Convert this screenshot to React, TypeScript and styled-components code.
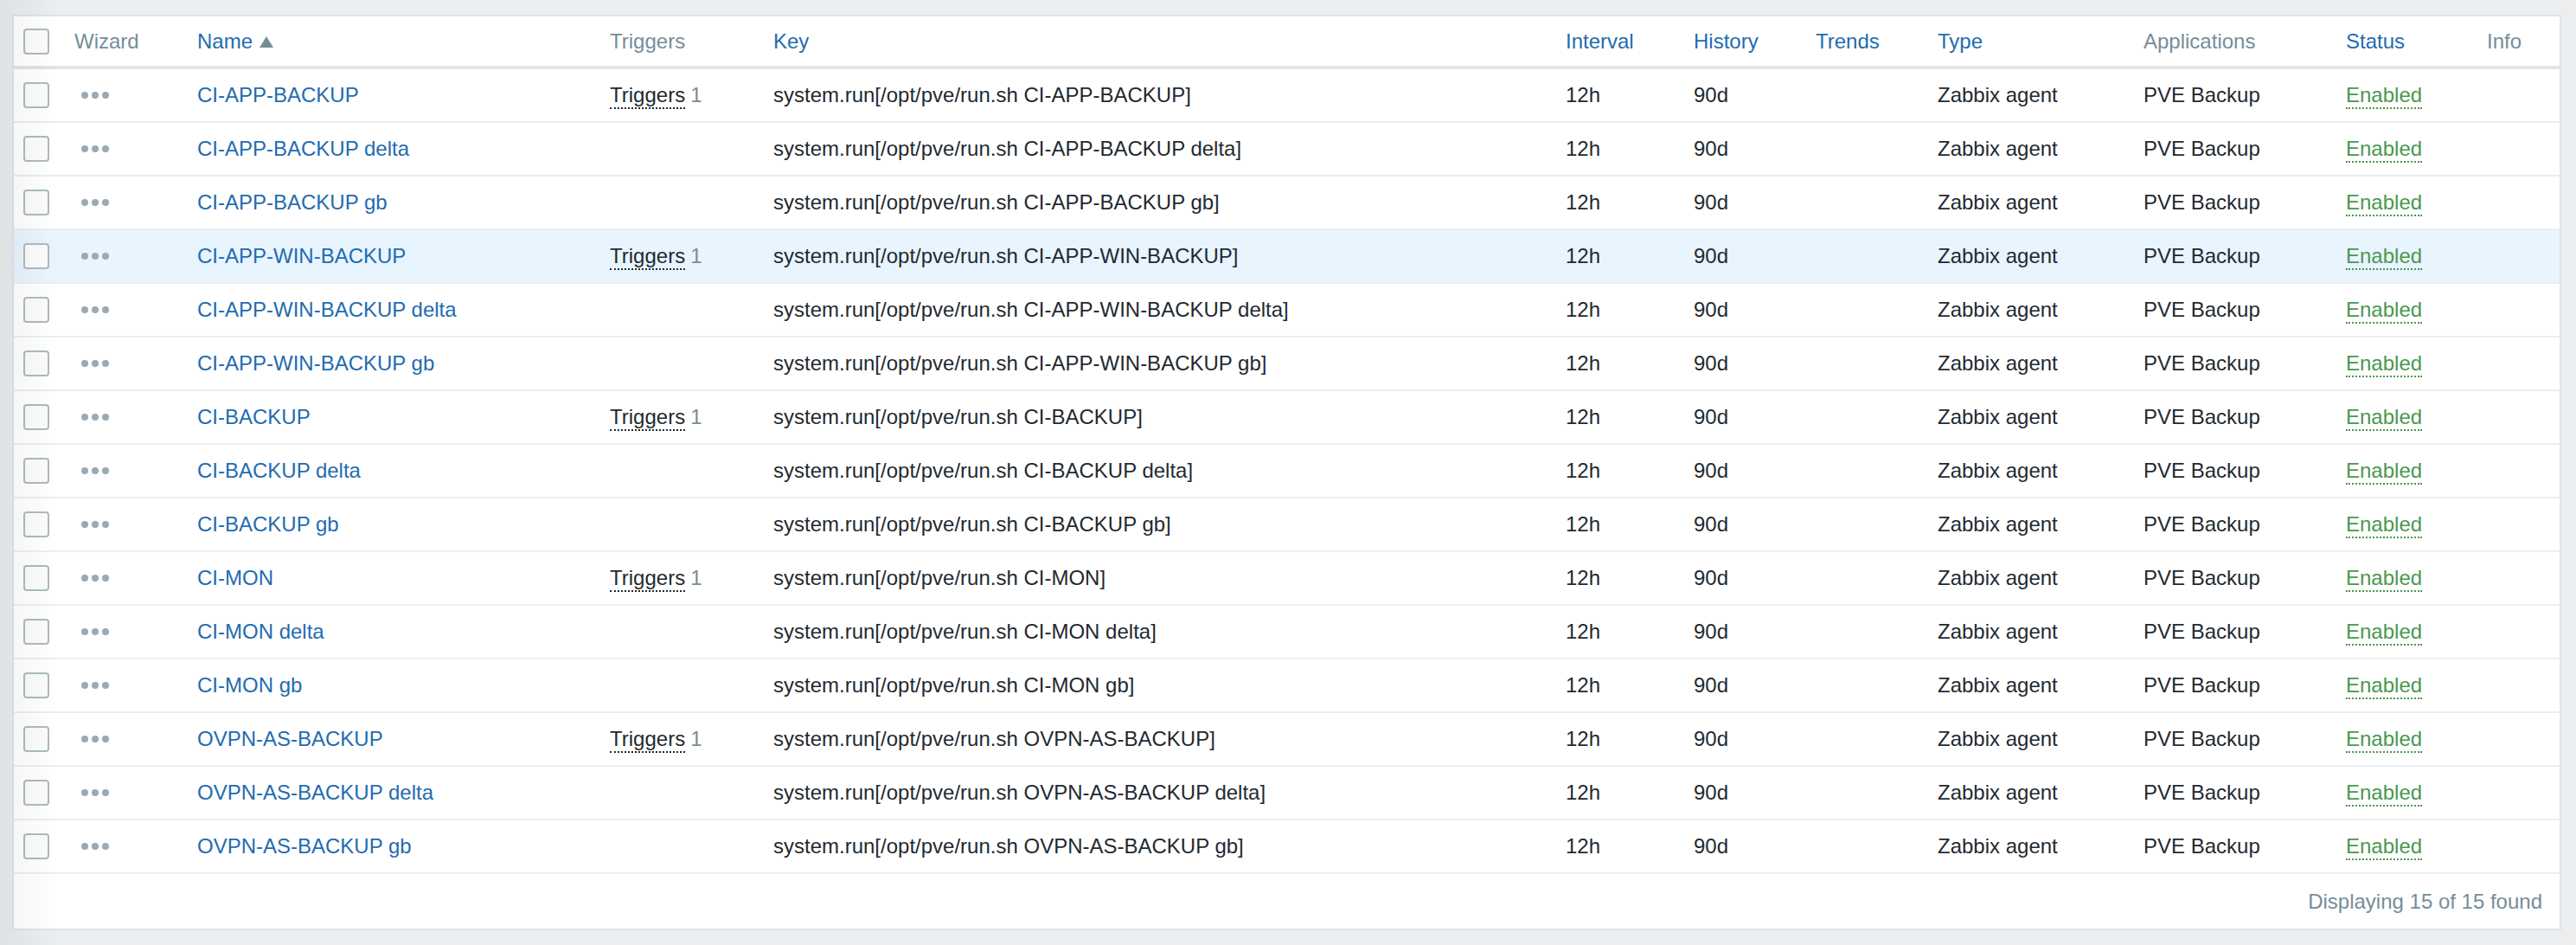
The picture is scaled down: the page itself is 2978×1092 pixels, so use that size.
import React from "react";
import styled, { createGlobalStyle } from "styled-components";

const GlobalStyle = createGlobalStyle`
  html, body {
    margin: 0;
    padding: 0;
    background: #ebedef;
  }
  body {
    font-family: "Liberation Sans", Arial, Helvetica, sans-serif;
    font-size: 24px;
    color: #1f2c33;
  }
  body::after {
    content: "";
    position: fixed;
    left: 0;
    top: 0;
    bottom: 0;
    width: 64px;
    background: linear-gradient(90deg, rgba(40, 50, 60, 0.06), rgba(40, 50, 60, 0));
    pointer-events: none;
  }
`;

const Page = styled.div`
  padding: 17px 17px 17px 14px;
`;

const Panel = styled.div`
  background: #ffffff;
  border: 2px solid #dfe4e7;
`;

const Table = styled.table`
  width: 100%;
  border-collapse: collapse;
  table-layout: fixed;
`;

const HeadCell = styled.th<{ $sortable?: boolean; $pad?: number }>`
  height: 57px;
  padding: 0 0 0 ${(p) => p.$pad ?? 0}px;
  text-align: left;
  font-weight: normal;
  white-space: nowrap;
  vertical-align: middle;
  color: ${(p) => (p.$sortable ? "#1f6cb0" : "#768d99")};
  border-bottom: 4px solid #dfe4e7;
`;

const Row = styled.tr<{ $hover?: boolean }>`
  background: ${(p) => (p.$hover ? "#e8f4fe" : "#ffffff")};
  border-bottom: 2px solid #ebeef0;
`;

const Cell = styled.td<{ $pad?: number }>`
  height: 60px;
  padding: 0 0 0 ${(p) => p.$pad ?? 0}px;
  white-space: nowrap;
  vertical-align: middle;
  color: #1f2a31;
`;

const Check = styled.span`
  display: block;
  box-sizing: border-box;
  width: 30px;
  height: 30px;
  border: 2px solid #acbbc2;
  border-radius: 4px;
  background: #fcfcfc;
`;

const Link = styled.span`
  color: #1f6cb0;
`;

const SortArrow = styled.span`
  display: inline-block;
  width: 0;
  height: 0;
  margin-left: 8px;
  border-left: 8px solid transparent;
  border-right: 8px solid transparent;
  border-bottom: 13px solid #768d99;
  vertical-align: 1px;
`;

const Dotted = styled.span<{ $color: string }>`
  color: ${(p) => p.$color};
  border-bottom: 2px dotted ${(p) => p.$color};
  padding-bottom: 1px;
`;

const Count = styled.span`
  color: #7a8c96;
  margin-left: 6px;
`;

const Footer = styled.div`
  height: 63px;
  display: flex;
  align-items: center;
  justify-content: flex-end;
  padding-right: 20px;
  color: #768d99;
`;

const Dots = () => (
  <svg width="36" height="10" viewBox="0 0 36 10" style={{ display: "block", marginLeft: 8 }}>
    <circle cx="4" cy="5" r="4" fill="#9ba9b2" />
    <circle cx="16" cy="5" r="4" fill="#9ba9b2" />
    <circle cx="28" cy="5" r="4" fill="#9ba9b2" />
  </svg>
);

const widths = [70, 142, 477, 189, 916, 148, 141, 141, 238, 234, 163, 84];

const bases = ["CI-APP-BACKUP", "CI-APP-WIN-BACKUP", "CI-BACKUP", "CI-MON", "OVPN-AS-BACKUP"];
const rows: { name: string; trig: boolean }[] = [];
bases.forEach((b) => {
  rows.push({ name: b, trig: true });
  rows.push({ name: `${b} delta`, trig: false });
  rows.push({ name: `${b} gb`, trig: false });
});

export default function App() {
  return (
    <>
      <GlobalStyle />
      <Page>
        <Panel>
          <Table>
            <colgroup>
              {widths.map((w, i) => (
                <col key={i} style={{ width: w }} />
              ))}
            </colgroup>
            <thead>
              <tr>
                <HeadCell $pad={11}>
                  <Check />
                </HeadCell>
                <HeadCell>Wizard</HeadCell>
                <HeadCell $sortable>
                  Name
                  <SortArrow />
                </HeadCell>
                <HeadCell>Triggers</HeadCell>
                <HeadCell $sortable>Key</HeadCell>
                <HeadCell $sortable>Interval</HeadCell>
                <HeadCell $sortable>History</HeadCell>
                <HeadCell $sortable>Trends</HeadCell>
                <HeadCell $sortable>Type</HeadCell>
                <HeadCell>Applications</HeadCell>
                <HeadCell $sortable>Status</HeadCell>
                <HeadCell>Info</HeadCell>
              </tr>
            </thead>
            <tbody>
              {rows.map((r, i) => (
                <Row key={r.name} $hover={i === 3}>
                  <Cell $pad={11}>
                    <Check />
                  </Cell>
                  <Cell>
                    <Dots />
                  </Cell>
                  <Cell>
                    <Link>{r.name}</Link>
                  </Cell>
                  <Cell>
                    {r.trig && (
                      <>
                        <Dotted $color="#1f2a31">Triggers</Dotted>
                        <Count>1</Count>
                      </>
                    )}
                  </Cell>
                  <Cell>system.run[/opt/pve/run.sh {r.name}]</Cell>
                  <Cell>12h</Cell>
                  <Cell>90d</Cell>
                  <Cell />
                  <Cell>Zabbix agent</Cell>
                  <Cell>PVE Backup</Cell>
                  <Cell>
                    <Dotted $color="#4a984e">Enabled</Dotted>
                  </Cell>
                  <Cell />
                </Row>
              ))}
            </tbody>
          </Table>
          <Footer>Displaying 15 of 15 found</Footer>
        </Panel>
      </Page>
    </>
  );
}
